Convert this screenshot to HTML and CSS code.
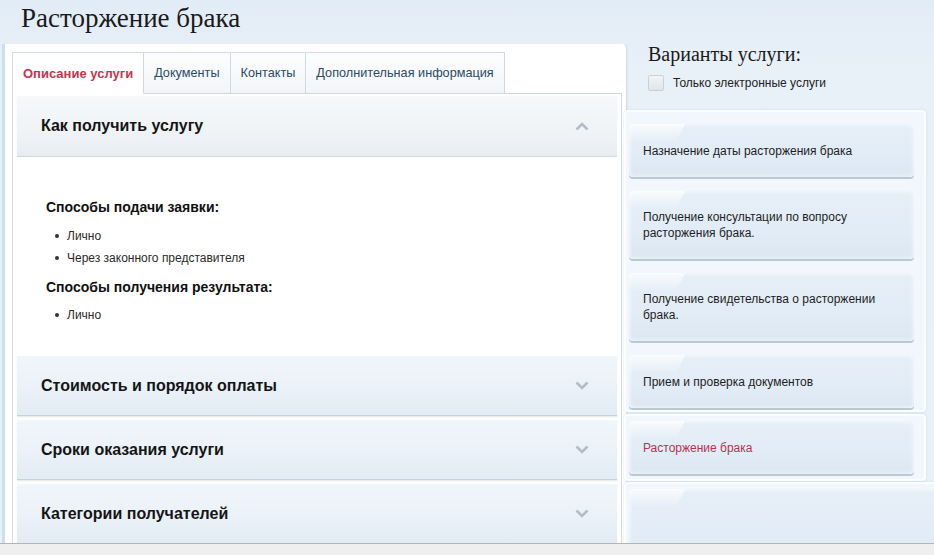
FILE: index.html
```html
<!DOCTYPE html>
<html lang="ru">
<head>
<meta charset="utf-8">
<title>Расторжение брака</title>
<link rel="stylesheet" href="styles.css">
</head>
<body>
<div class="page">
  <header class="title-bar">
    <h1 class="title">Расторжение брака</h1>
  </header>
  <div class="main">
    <section class="left">
      <div class="tabbox">
        <nav class="tabs">
          <div class="tab active">Описание услуги</div>
          <div class="tab">Документы</div>
          <div class="tab">Контакты</div>
          <div class="tab">Дополнительная информация</div>
          <div class="tab-fill"></div>
        </nav>
        <div class="acc">
          <div class="acc-head first">
            <span>Как получить услугу</span>
            <svg class="chev" width="14" height="9" viewBox="0 0 14 9"><polyline points="1.5,7.5 7,2 12.5,7.5" fill="none" stroke="#b4bcc4" stroke-width="2.6"/></svg>
          </div>
          <div class="acc-body">
            <h4 class="sub">Способы подачи заявки:</h4>
            <ul class="list">
              <li>Лично</li>
              <li>Через законного представителя</li>
            </ul>
            <h4 class="sub">Способы получения результата:</h4>
            <ul class="list last">
              <li>Лично</li>
            </ul>
          </div>
          <div class="acc-head">
            <span>Стоимость и порядок оплаты</span>
            <svg class="chev" width="14" height="9" viewBox="0 0 14 9"><polyline points="1.5,1.5 7,7 12.5,1.5" fill="none" stroke="#b4bcc4" stroke-width="2.6"/></svg>
          </div>
          <div class="acc-head">
            <span>Сроки оказания услуги</span>
            <svg class="chev" width="14" height="9" viewBox="0 0 14 9"><polyline points="1.5,1.5 7,7 12.5,1.5" fill="none" stroke="#b4bcc4" stroke-width="2.6"/></svg>
          </div>
          <div class="acc-head">
            <span>Категории получателей</span>
            <svg class="chev" width="14" height="9" viewBox="0 0 14 9"><polyline points="1.5,1.5 7,7 12.5,1.5" fill="none" stroke="#b4bcc4" stroke-width="2.6"/></svg>
          </div>
        </div>
      </div>
    </section>
    <aside class="right">
      <h2 class="variants-title">Варианты услуги:</h2>
      <label class="check-row"><span class="checkbox"></span><span>Только электронные услуги</span></label>
      <div class="vgroup">
        <div class="card">Назначение даты расторжения брака</div>
        <div class="card">Получение консультации по вопросу расторжения брака.</div>
        <div class="card">Получение свидетельства о расторжении брака.</div>
        <div class="card">Прием и проверка документов</div>
      </div>
      <div class="vgroup selected">
        <div class="card current">Расторжение брака</div>
      </div>
      <div class="vgroup tail">
        <div class="card empty"></div>
      </div>
    </aside>
  </div>
  <footer class="status"></footer>
</div>
</body>
</html>
```
FILE: styles.css
```css
* { box-sizing: border-box; }
html, body { margin: 0; padding: 0; }
body {
  font-family: "Liberation Sans", Arial, sans-serif;
  color: #1c1c1c;
  background: #e8f0f8;
}
.page {
  width: 934px;
  height: 555px;
  overflow: hidden;
  display: flex;
  flex-direction: column;
  background: linear-gradient(180deg, #e2ecf6 0%, #e8f0f8 12%, #e9f1f9 100%);
}
.title-bar {
  height: 44px;
  flex: none;
  padding: 3px 0 0 21px;
}
.title {
  margin: 0;
  font-family: "Liberation Serif", "Times New Roman", serif;
  font-weight: normal;
  font-size: 27px;
  line-height: 30px;
  color: #1a1a1a;
}
.main {
  flex: 1;
  display: flex;
  min-height: 0;
  overflow: hidden;
}
.left {
  flex: none;
  width: 624px;
  margin-left: 2px;
  border-left: 3px solid #cbdff0;
  background: #fff;
  padding: 8px 4px 0 7px;
  border-top-right-radius: 4px;
  box-shadow: 1px 0 2px rgba(150, 175, 200, .35);
}
.tabbox {
  border-left: 1px solid #d3dce4;
  height: 100%;
  display: flex;
  flex-direction: column;
}
.tabs {
  display: flex;
  height: 42px;
  flex: none;
}
.tab {
  display: flex;
  align-items: center;
  padding: 0 10px;
  font-size: 12.7px;
  color: #2c4a68;
  border-top: 1px solid #d6dee5;
  border-right: 1px solid #cfd9e2;
  border-bottom: 1px solid #cdd7e0;
  background: linear-gradient(180deg, #fcfdfe 0%, #f2f6f9 100%);
}
.tab.active {
  font-size: 13px;
  font-weight: bold;
  color: #c2364e;
  background: #fff;
  border-bottom-color: #fff;
}
.tab-fill {
  flex: 1;
  border-bottom: 1px solid #cdd7e0;
}
.acc {
  flex: 1;
  border-right: 1px solid #d3dce4;
  padding: 2px 4px 0 4px;
  display: flex;
  flex-direction: column;
}
.acc-head {
  flex: none;
  height: 60px;
  display: flex;
  align-items: center;
  justify-content: space-between;
  padding: 0 28px 0 24px;
  font-size: 16px;
  font-weight: bold;
  color: #151515;
  background: linear-gradient(180deg, #f1f6fb 0%, #eaf1f8 55%, #e3ecf4 100%);
  border-bottom: 1px solid #c7d1da;
  box-shadow: 0 1px 1px rgba(120, 140, 160, .18);
  margin-bottom: 4px;
}
.acc-head.first {
  height: 61px;
  margin-bottom: 0;
  background: linear-gradient(180deg, #f6f8fa 0%, #f0f3f6 60%, #e8edf1 100%);
  border-bottom-color: #cfd6dc;
}
.acc-head .chev { flex: none; }
.acc-body {
  flex: none;
  background: #fff;
  padding: 41px 0 29px 29px;
  margin-bottom: 1px;
}
.sub {
  margin: 0;
  font-size: 14px;
  font-weight: bold;
  line-height: 18px;
  color: #111;
}
.list {
  list-style: none;
  margin: 9px 0 9px 0;
  padding: 0;
}
.list.last { margin-bottom: 0; margin-top: 8px; }
.list li {
  position: relative;
  padding-left: 21px;
  font-size: 12px;
  line-height: 22px;
  color: #2a2a2a;
}
.list li::before {
  content: "";
  position: absolute;
  left: 9px;
  top: 9px;
  width: 4px;
  height: 4px;
  border-radius: 50%;
  background: #333;
}
.right {
  flex: 1;
  min-width: 0;
  padding-left: 22px;
  display: flex;
  flex-direction: column;
}
.variants-title {
  margin: 0;
  font-family: "Liberation Serif", "Times New Roman", serif;
  font-weight: normal;
  font-size: 20px;
  line-height: 20px;
  color: #1a1a1a;
}
.check-row {
  display: flex;
  align-items: center;
  gap: 9px;
  margin-top: 11px;
  height: 16px;
  font-size: 12px;
  color: #222;
}
.checkbox {
  width: 16px;
  height: 16px;
  border: 1px solid #c9d1d9;
  border-radius: 2px;
  background: linear-gradient(180deg, #f1f4f7 0%, #dfe5eb 100%);
}
.vgroup {
  margin-left: -24px;
  width: 302px;
  background: #f1f7fc;
  border: 2px solid #fbfdfe;
  border-radius: 4px;
  padding: 12px 10px 2px 3px;
  box-shadow: 0 0 2px rgba(170, 195, 215, .5);
}
.right > .vgroup:nth-of-type(1) { margin-top: 19px; }
.vgroup.selected {
  margin-top: 2px;
  padding-top: 5px;
  padding-bottom: 5px;
}
.vgroup.tail {
  margin-top: 1px;
  width: 320px;
  padding: 5px 0 0 3px;
  flex: 1;
  border-right: none;
}
.card {
  position: relative;
  display: flex;
  align-items: center;
  min-height: 53px;
  padding: 18px 14px;
  margin-bottom: 14px;
  font-size: 12px;
  line-height: 16px;
  color: #1e1e1e;
  border-radius: 4px;
  background: linear-gradient(180deg, #e6eff8 0%, #e2ecf6 60%, #dce7f1 100%);
  box-shadow: 0 2px 0 #b9c8d5, inset 0 0 5px rgba(255, 255, 255, .8);
}
.card::before {
  content: "";
  position: absolute;
  left: 0;
  top: 0;
  width: 56px;
  height: 18px;
  border-top-left-radius: 4px;
  background: linear-gradient(180deg, rgba(255, 255, 255, .75) 0%, rgba(255, 255, 255, 0) 100%);
  clip-path: polygon(0 0, 100% 0, 84% 100%, 0 100%);
}
.vgroup .card:last-child { margin-bottom: 0; }
.card.current { color: #b2344f; }
.card.empty { min-height: 80px; border-bottom-right-radius: 0; border-top-right-radius: 0; }
.status {
  flex: none;
  height: 12px;
  background: #efefef;
  border-top: 1px solid #b4b4b4;
}
```
